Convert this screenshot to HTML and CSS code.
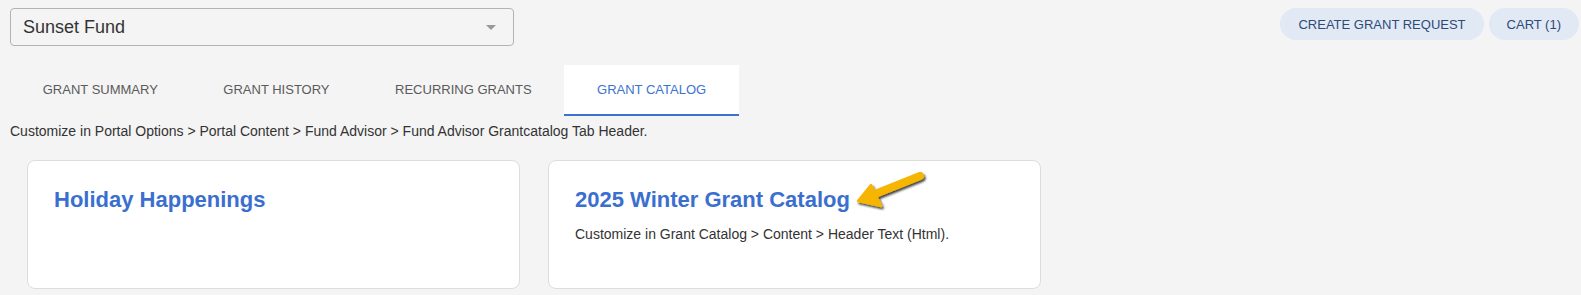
FILE: index.html
```html
<!DOCTYPE html>
<html>
<head>
<meta charset="utf-8">
<link rel="stylesheet" href="styles.css">
</head>
<body>
<div class="page">
  <div class="topbar">
    <div class="select">
      <span class="select-value">Sunset Fund</span>
      <span class="caret"></span>
    </div>
    <div class="actions">
      <button class="pill">CREATE GRANT REQUEST</button>
      <button class="pill">CART (1)</button>
    </div>
  </div>
  <nav class="tabs">
    <div class="tab">GRANT SUMMARY</div>
    <div class="tab">GRANT HISTORY</div>
    <div class="tab">RECURRING GRANTS</div>
    <div class="tab active">GRANT CATALOG</div>
  </nav>
  <div class="crumb">Customize in Portal Options &gt; Portal Content &gt; Fund Advisor &gt; Fund Advisor Grantcatalog Tab Header.</div>
  <div class="cards">
    <div class="card">
      <h2 class="card-title">Holiday Happenings</h2>
    </div>
    <div class="card">
      <h2 class="card-title">2025 Winter Grant Catalog</h2>
      <p class="card-text">Customize in Grant Catalog &gt; Content &gt; Header Text (Html).</p>
      <svg class="arrow" width="84" height="52" viewBox="0 0 84 52">
        <defs>
          <filter id="sh" x="-30%" y="-30%" width="160%" height="160%">
            <feDropShadow dx="1.5" dy="2" stdDeviation="1.2" flood-color="#000" flood-opacity="0.75"/>
          </filter>
        </defs>
        <g filter="url(#sh)">
          <line x1="69" y1="13" x2="24" y2="31" stroke="#f6b500" stroke-width="8" stroke-linecap="round"/>
          <polygon points="7,38 20,22 30,43" fill="#f6b500" stroke="#f6b500" stroke-width="2.5" stroke-linejoin="round"/>
        </g>
      </svg>
    </div>
  </div>
</div>
</body>
</html>
```
FILE: styles.css
```css
* { box-sizing: border-box; }
html, body { margin: 0; padding: 0; background: #f4f4f4; }
body { font-family: "Liberation Sans", Arial, sans-serif; color: #333; }
.page { padding: 8px 2px 0 10px; }
.topbar { display: flex; justify-content: space-between; align-items: flex-start; }
.select {
  width: 504px; height: 38px;
  border: 1px solid #b3b3b3; border-radius: 4px;
  display: flex; align-items: center; justify-content: space-between;
  padding: 0 17px 0 12px;
}
.select-value { font-size: 18px; color: #333; }
.caret {
  width: 0; height: 0;
  border-left: 5px solid transparent; border-right: 5px solid transparent;
  border-top: 5px solid #999;
}
.actions { display: flex; gap: 5px; }
.pill {
  height: 32px; border: none; border-radius: 16px;
  background: #e1e9f5; color: #2f4a78;
  font-family: "Liberation Sans", Arial, sans-serif; font-size: 13px;
  padding: 0 18px; cursor: pointer;
}
.tabs { display: flex; margin-top: 19px; height: 51px; }
.tab {
  padding: 0 32.75px; display: flex; align-items: center;
  font-size: 13px; color: #5a5a5a;
  border-bottom: 2px solid transparent;
}
.tab.active { background: #fff; color: #3b73cf; border-bottom-color: #3b73cf; }
.crumb { font-size: 14px; color: #333; margin-top: 7px; line-height: 16px; }
.cards { display: flex; gap: 28px; padding-left: 17px; margin-top: 21px; }
.card {
  position: relative;
  width: 493px; height: 129px;
  background: #fff; border: 1px solid #ddd; border-radius: 8px;
  padding: 26px 26px;
}
.card-title { margin: 0; font-size: 22px; font-weight: bold; color: #3a6fcf; line-height: 26px; }
.card-text { margin: 13px 0 0; font-size: 14px; color: #333; }
.arrow { position: absolute; left: 302px; top: 2px; }
```
